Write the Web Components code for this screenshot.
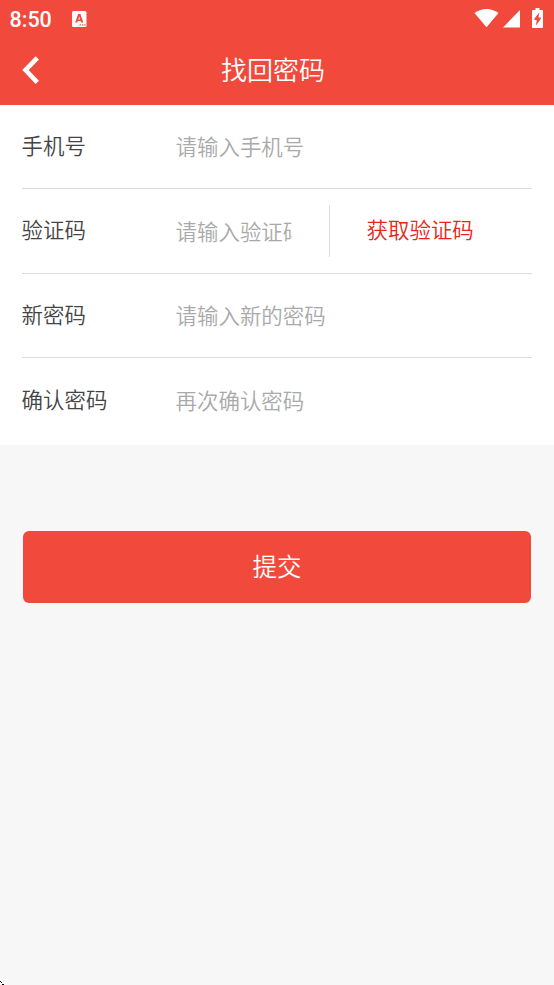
<!DOCTYPE html>
<html lang="zh-CN">
<head>
<meta charset="utf-8">
<title>找回密码</title>
<style>
    html, body {
        margin: 0;
        height: 100%;
    }
    body {
        --clr-brand: #f1493b;
        --clr-link: #ea2517;
        --clr-line: #dcdcdc;
        --clr-hint: #a9a9a9;
        background: #f7f7f7;
        color: #444;
        font-family: Roboto, "Noto Sans CJK SC", sans-serif;
        font-size: 21.45px;
        font-weight: 350;
        overflow: hidden;
    }
</style>
</head>
<body>
<reset-page></reset-page>

<script>
class StatusBar extends HTMLElement {
    constructor() {
        super();
        const shadow = this.attachShadow({ mode: 'open' });
        shadow.innerHTML = `
        <style>
        :host {
            display: flex;
            align-items: center;
            height: 38px;
            padding: 0 9.5px;
            box-sizing: border-box;
            color: #fff;
            font-size: 21.5px;
            font-weight: 500;
        }
        svg { display: block; fill: #fff; }
        .app { margin: -1px auto 0 20.5px; }
        .signals { display: flex; align-items: center; margin: -2px 1.5px 0 0; }
        .cell { margin: 2px 0 0 4px; }
        .battery { margin-left: 12px; }
        .cut { fill: var(--clr-brand); }
        </style>
        <span><slot></slot></span>
        <svg class="app" width="15" height="16" viewBox="0 0 15 16">
            <rect width="14.5" height="16" rx="1.5"/>
            <path class="cut" fill-rule="evenodd" d="M3.2 11.5 6.1 3h2.3l2.9 8.5H9.3L8.7 10H5.8l-.5 1.5zM6.3 8.4h1.9L7.25 5.5z"/>
            <path class="cut" d="M7.5 13.2h1.4v1.4H7.5zM9.9 13.2h1.4v1.4H9.9zM12.2 13.2h1.3v1.4h-1.3z"/>
        </svg>
        <div class="signals">
            <svg width="25" height="20" viewBox="0 0 25 20"><path d="M.5 5Q12.5-3 24.5 5L12.5 19.2z"/></svg>
            <svg class="cell" width="17" height="18" viewBox="0 0 17 18"><path d="M17 0v17.5H0z"/></svg>
            <svg class="battery" width="11" height="20" viewBox="0 0 11 20">
                <path d="M3.5 0h4v2H10a1 1 0 0 1 1 1v16a1 1 0 0 1-1 1H1a1 1 0 0 1-1-1V3a1 1 0 0 1 1-1h2.5z"/>
                <path class="cut" d="M7.3 4.500 2.500 10.500V12h2.200l-.8 5.500 4.900-6.500V9.500H6.500z"/>
            </svg>
        </div>
        `;
    }
}

class TitleBar extends HTMLElement {
    constructor() {
        super();
        const shadow = this.attachShadow({ mode: 'open' });
        shadow.innerHTML = `
        <style>
        :host {
            display: grid;
            grid-template-columns: 60px 1fr 68px;
            align-items: center;
            height: 67px;
            color: #fff;
            font-size: 26px;
            line-height: 38px;
        }
        svg { display: block; margin: -4px 0 0 22px; }
        .title { text-align: center; margin-top: -2px; }
        </style>
        <svg width="18" height="28" viewBox="0 0 18 28">
            <path d="M15.3 1.800 3.500 14.100l11.800 12.300" fill="none" stroke="#fff" stroke-width="4.600"/>
        </svg>
        <span class="title"><slot></slot></span>
        `;
    }
}

class FormRow extends HTMLElement {
    constructor() {
        super();
        const shadow = this.attachShadow({ mode: 'open' });
        shadow.innerHTML = `
        <style>
        :host {
            display: flex;
            align-items: center;
            height: 84.6px;
            margin: 0 21.6px;
            box-sizing: border-box;
            border-bottom: 1px solid var(--clr-line);
            line-height: 32px;
            white-space: nowrap;
        }
        :host([first]) { height: 84px; }
        :host([last]) {
            height: 87px;
            border-bottom-color: transparent;
            padding-bottom: 2px;
        }
        .label { width: 154px; flex: none; margin-top: 1px; }
        .hint {
            flex: 1;
            overflow: hidden;
            color: var(--clr-hint);
            margin-top: 4px;
        }
        :host([first]) .label { margin-top: 0; }
        :host([first]) .hint, :host([last]) .hint { margin-top: 3px; }
        :host([narrow]) .hint { flex: 0 0 116.5px; }
        </style>
        <span class="label"></span>
        <span class="hint"></span>
        <slot></slot>
        `;
    }

    connectedCallback() {
        this.shadowRoot.querySelector('.label').textContent = this.getAttribute('label');
        this.shadowRoot.querySelector('.hint').textContent = this.getAttribute('hint');
    }
}

class CodeButton extends HTMLElement {
    constructor() {
        super();
        const shadow = this.attachShadow({ mode: 'open' });
        shadow.innerHTML = `
        <style>
        :host {
            display: flex;
            align-items: center;
            height: 52px;
            margin-left: 37px;
            padding-left: 36.5px;
            border-left: 1px solid var(--clr-line);
            color: var(--clr-link);
            cursor: pointer;
        }
        </style>
        <span><slot></slot></span>
        `;
    }
}

class SubmitButton extends HTMLElement {
    constructor() {
        super();
        const shadow = this.attachShadow({ mode: 'open' });
        shadow.innerHTML = `
        <style>
        :host {
            display: flex;
            align-items: center;
            justify-content: center;
            height: 72px;
            margin: 86px 23px 0;
            border-radius: 6px;
            background: var(--clr-brand);
            color: #fff;
            font-size: 24.5px;
            line-height: 36px;
            cursor: pointer;
        }
        span { margin-top: 2px; }
        </style>
        <span><slot></slot></span>
        `;
    }
}

class ResetPage extends HTMLElement {
    constructor() {
        super();
        const shadow = this.attachShadow({ mode: 'open' });
        shadow.innerHTML = `
        <style>
        :host {
            display: block;
            position: relative;
            height: 100vh;
        }
        header { background: var(--clr-brand); }
        main { background: #fff; height: 340px; }
        .corner {
            position: absolute;
            left: 0;
            bottom: 0;
            display: block;
        }
        </style>
        <header>
            <status-bar>8:50</status-bar>
            <title-bar>找回密码</title-bar>
        </header>
        <main>
            <form-row label="手机号" hint="请输入手机号" first></form-row>
            <form-row label="验证码" hint="请输入验证码" narrow><code-button>获取验证码</code-button></form-row>
            <form-row label="新密码" hint="请输入新的密码"></form-row>
            <form-row label="确认密码" hint="再次确认密码" last></form-row>
        </main>
        <submit-button>提交</submit-button>
        <svg class="corner" width="4" height="4" viewBox="0 0 4 4" shape-rendering="crispEdges">
            <path d="M0 0h1v1h1v1H1V1H0zM2 3h2v1H2z"/>
        </svg>
        `;
    }
}

customElements.define('status-bar', StatusBar);
customElements.define('title-bar', TitleBar);
customElements.define('form-row', FormRow);
customElements.define('code-button', CodeButton);
customElements.define('submit-button', SubmitButton);
customElements.define('reset-page', ResetPage);
</script>
</body>
</html>
